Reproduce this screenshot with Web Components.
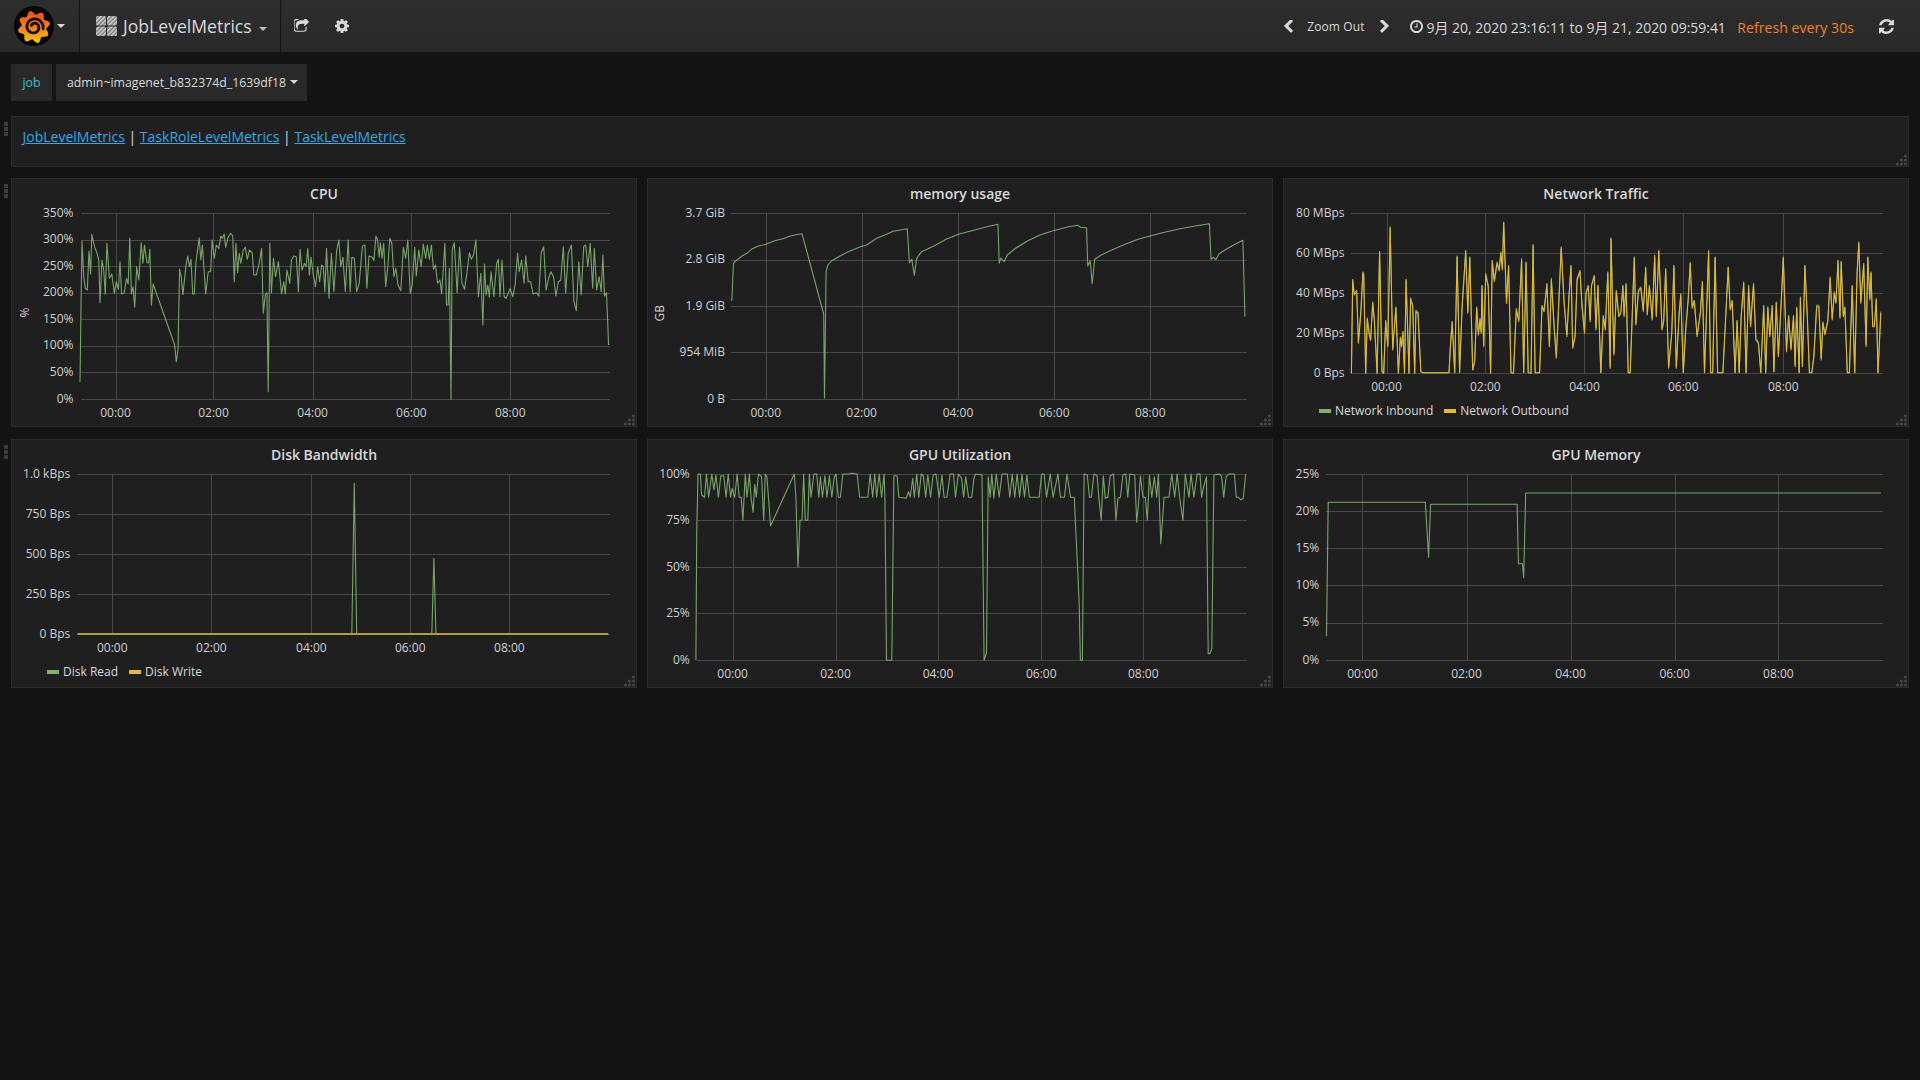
<!DOCTYPE html>
<html lang="zh">
<head>
<meta charset="utf-8">
<title>JobLevelMetrics</title>
<style>
html,body{margin:0;padding:0;background:#141414;color:#d8d9da;font-family:"Open Sans","Noto Sans CJK SC",sans-serif;overflow:hidden;height:1080px}
a{color:#33a9e8}
</style>
</head>
<body>
<gf-dashboard>
  <gf-navbar slot="nav" title-text="JobLevelMetrics"></gf-navbar>
  <gf-var-row label="job" value="admin~imagenet_b832374d_1639df18"></gf-var-row>
  <gf-text-panel>
    <a href="#">JobLevelMetrics</a> | <a href="#">TaskRoleLevelMetrics</a> | <a href="#">TaskLevelMetrics</a>
  </gf-text-panel>
  <gf-panel-grid>
    <gf-graph-panel chart="cpu" handle></gf-graph-panel>
    <gf-graph-panel chart="mem"></gf-graph-panel>
    <gf-graph-panel chart="net"></gf-graph-panel>
    <gf-graph-panel chart="disk" handle></gf-graph-panel>
    <gf-graph-panel chart="gpu"></gf-graph-panel>
    <gf-graph-panel chart="gmem"></gf-graph-panel>
  </gf-panel-grid>
</gf-dashboard>
<script>
const ICONS={
 gear:["128 128 1536 1536","M1152 896q0-106-75-181t-181-75-181 75-75 181 75 181 181 75 181-75 75-181zm512-109v222q0 12-8 23t-20 13l-185 28q-19 54-39 91 35 50 107 138 10 12 10 25t-9 23q-27 37-99 108t-94 71q-12 0-26-9l-138-108q-44 23-91 38-16 136-29 186-7 28-36 28h-222q-14 0-24.500-8.500t-11.500-21.500l-28-184q-49-16-90-37l-141 107q-10 9-25 9-14 0-25-11-126-114-165-168-7-10-7-23 0-12 8-23 15-21 51-66.500t54-70.500q-27-50-41-99l-183-27q-13-2-21-12.500t-8-23.500v-222q0-12 8-23t19-13l186-28q14-46 39-92-40-57-107-138-10-12-10-24 0-10 9-23 26-36 98.500-107.500t94.500-71.500q13 0 26 10l138 107q44-23 91-38 16-136 29-186 7-28 36-28h222q14 0 24.500 8.500t11.500 21.500l28 184q49 16 90 37l142-107q9-9 24-9 13 0 25 10 129 119 165 170 7 8 7 22 0 12-8 23-15 21-51 66.500t-54 70.500q26 50 41 98l183 28q13 2 21 12.500t8 23.500z"],
 refresh:["128 128 1536 1536","M1639 1056q0 5-1 7-64 268-268 434.500t-478 166.500q-146 0-282.500-55t-243.500-157l-129 129q-19 19-45 19t-45-19-19-45v-448q0-26 19-45t45-19h448q26 0 45 19t19 45-19 45l-137 137q71 66 161 102t187 36q134 0 250-65t186-179q11-17 53-117 8-23 30-23h192q13 0 22.500 9.500t9.500 22.500zm25-800v448q0 26-19 45t-45 19h-448q-26 0-45-19t-19-45 19-45l138-138q-148-137-349-137-134 0-250 65t-186 179q-11 17-53 117-8 23-30 23h-199q-13 0-22.500-9.500t-9.500-22.500v-7q65-268 270-434.500t480-166.500q146 0 284 55.500t245 156.500l130-129q19-19 45-19t45 19 19 45z"],
 left:["280 128 1170 1536","M1427 301l-531 531 531 531q19 19 19 45t-19 45l-166 166q-19 19-45 19t-45-19l-742-742q-19-19-19-45t19-45l742-742q19-19 45-19t45 19l166 166q19 19 19 45t-19 45z"],
 right:["340 128 1170 1536","M1363 877l-742 742q-19 19-45 19t-45-19l-166-166q-19-19-19-45t19-45l531-531-531-531q-19-19-19-45t19-45l166-166q19-19 45-19t45 19l742 742q19 19 19 45t-19 45z"],
 clock:["128 128 1536 1536","M1024 544v448q0 14-9 23t-23 9h-320q-14 0-23-9t-9-23v-64q0-14 9-23t23-9h224v-352q0-14 9-23t23-9h64q14 0 23 9t9 23zm416 352q0-148-73-273t-198-198-273-73-273 73-198 198-73 273 73 273 198 198 273 73 273-73 198-198 73-273zm224 0q0 209-103 385.500t-279.500 279.500-385.500 103-385.500-103-279.500-279.500-103-385.500 103-385.500 279.500-279.500 385.500-103 385.500 103 279.500 279.500 103 385.500z"],
 share:["128 128 1600 1536","M1472 989v259q0 119-84.500 203.500t-203.500 84.500h-832q-119 0-203.500-84.500t-84.500-203.500v-832q0-119 84.500-203.500t203.500-84.500h255q13 0 22.500 9.500t9.500 22.500q0 27-26 32-77 26-133 60-10 4-16 4h-112q-66 0-113 47t-47 113v832q0 66 47 113t113 47h832q66 0 113-47t47-113v-214q0-19 18-29 28-13 54-37 16-16 35-8 21 9 21 29zm237-496l-384 384q-18 19-45 19-12 0-25-5-39-17-39-59v-192h-160q-323 0-438 131-119 137-74 473 3 23-20 34-8 2-12 2-16 0-26-13-10-14-21-31t-39.500-68.500-49.500-99.500-38.500-114-17.500-122q0-49 3.500-91t14-90 28-88 47-81.500 68.500-74 94.500-61.500 124.500-48.500 159.500-30.500 196.500-11h160v-192q0-42 39-59 13-5 25-5 26 0 45 19l384 384q19 19 19 45t-19 45z"]
};
class GfIcon extends HTMLElement{
 constructor(){super();this.attachShadow({mode:"open"});}
 connectedCallback(){
  const [vb,d]=ICONS[this.getAttribute("name")];
  const w=this.getAttribute("w"),h=this.getAttribute("h");
  this.shadowRoot.innerHTML=`<style>:host{display:block;flex:none;width:${w}px;height:${h}px;line-height:0}svg{display:block;width:100%;height:100%}</style><svg viewBox="${vb}" preserveAspectRatio="none"><path d="${d}" fill="currentColor"/></svg>`;
 }
}
customElements.define("gf-icon",GfIcon);

class GfLogo extends HTMLElement{
 constructor(){
  super();this.attachShadow({mode:"open"});
  const cx=20,cy=21;let gear="";
  for(let i=0;i<=240;i++){
   const a=i/240*Math.PI*2-0.25;
   const t=((a+0.25)*8/(Math.PI*2))%1, f=Math.pow(0.5+0.5*Math.cos(t*Math.PI*2),0.9);
   const r=12.4+3.9*f;
   gear+=(i?"L":"M")+(cx+r*Math.cos(a)).toFixed(2)+" "+(cy+r*Math.sin(a)).toFixed(2);
  }
  let sp="";
  for(let i=0;i<=120;i++){
   const u=i/120,a=0.2-u*Math.PI*2*1.45,r=9.3-u*6.3;
   sp+=(i?"L":"M")+(cx+r*Math.cos(a)).toFixed(2)+" "+(cy+r*Math.sin(a)).toFixed(2);
  }
  this.shadowRoot.innerHTML=`<style>:host{display:block;flex:none;width:40px;height:40px}svg{display:block}</style>
  <svg width="40" height="40" viewBox="0 0 40 40"><defs><linearGradient id="g" x1="0" y1="0" x2="0" y2="1"><stop offset="0" stop-color="#f0501f"/><stop offset=".5" stop-color="#f57b20"/><stop offset="1" stop-color="#fcc60d"/></linearGradient></defs>
  <circle cx="20" cy="20" r="20" fill="#050505"/><path d="${gear}Z" fill="url(#g)"/>
  <path d="${sp}" fill="none" stroke="#1a0d02" stroke-width="2.800" stroke-linecap="round"/></svg>`;
 }
}
customElements.define("gf-logo",GfLogo);

class GfCaret extends HTMLElement{
 constructor(){super();this.attachShadow({mode:"open"}).innerHTML=`<style>:host{display:block;flex:none;width:0;height:0;border-left:4px solid transparent;border-right:4px solid transparent;border-top:4px solid currentColor}</style>`;}
}
customElements.define("gf-caret",GfCaret);

class GfNavbar extends HTMLElement{
 constructor(){
  super();this.attachShadow({mode:"open"});
 }
 connectedCallback(){
  this.shadowRoot.innerHTML=`<style>
  :host{display:flex;align-items:stretch;height:52px;background:linear-gradient(#2d2d2d,#292929);color:#d8d9da;font-size:14px}
  .logo{width:79px;box-sizing:border-box;display:flex;align-items:center;padding:0 0 0 14px;border-right:0}
  .logo gf-caret{margin:0 0 0 3px;color:#d8d9da}
  .sep{width:1px;background:#141414;flex:none}
  .title{width:200px;box-sizing:border-box;display:flex;align-items:center;padding-left:16px;font-size:17.600px}
  .title svg{display:block;margin-right:6px;flex:none}
  .title gf-caret{margin:6px 0 0 7px;color:#b9babb}
  .tools{display:flex;align-items:center;padding-left:13px;gap:26px}
  .right{margin-left:auto;display:flex;align-items:center;padding-right:26px}
  .zoom{font-size:12px;margin:0 15px 0 14px;letter-spacing:.1px}
  .time{margin:2px 11.500px 0 4px;white-space:nowrap;letter-spacing:-.03px}
  .refresh{color:#f5811f;margin:2px 25px 0 0;white-space:nowrap;letter-spacing:.07px}
  </style>
  <div class="logo"><gf-logo></gf-logo><gf-caret></gf-caret></div><div class="sep"></div>
  <div class="title">
   <svg width="21" height="20" viewBox="0 0 21 20"><defs><pattern id="h" width="3" height="3" patternUnits="userSpaceOnUse" patternTransform="rotate(45)"><rect width="3" height="3" fill="#787878"/><rect width="1.600" height="3" fill="#cfcfcf"/></pattern></defs>
   <rect x="0" y="0" width="10" height="9.500" rx="1.500" fill="url(#h)"/><rect x="11" y="0" width="10" height="9.500" rx="1.500" fill="url(#h)"/><rect x="0" y="10.500" width="10" height="9.500" rx="1.500" fill="url(#h)"/><rect x="11" y="10.500" width="10" height="9.500" rx="1.500" fill="url(#h)"/></svg>
   <span>${this.getAttribute("title-text")}</span><gf-caret></gf-caret></div><div class="sep"></div>
  <div class="tools"><gf-icon name="share" w="15" h="14"></gf-icon><gf-icon name="gear" w="14" h="14"></gf-icon></div>
  <div class="right">
   <gf-icon name="left" w="10" h="13"></gf-icon><span class="zoom">Zoom Out</span><gf-icon name="right" w="10" h="13" style="margin-right:20px"></gf-icon>
   <gf-icon name="clock" w="13" h="13"></gf-icon><span class="time">9月 20, 2020 23:16:11 to 9月 21, 2020 09:59:41</span>
   <span class="refresh">Refresh every 30s</span><gf-icon name="refresh" w="15" h="15"></gf-icon>
  </div>`;
 }
}
customElements.define("gf-navbar",GfNavbar);

class GfVarRow extends HTMLElement{
 constructor(){super();this.attachShadow({mode:"open"});}
 connectedCallback(){
  this.shadowRoot.innerHTML=`<style>
  :host{display:flex;gap:4px;height:37px;margin:12px 11px 15px;font-size:12.300px}
  div{display:flex;align-items:center;background:#292929;box-sizing:border-box}
  .l{width:41px;justify-content:center;color:#36c3d6}
  .v{width:251px;padding-left:11px;color:#d8d9da;white-space:nowrap}
  gf-caret{margin:-2px 0 0 4px}
  </style><div class="l">${this.getAttribute("label")}</div><div class="v">${this.getAttribute("value")}<gf-caret></gf-caret></div>`;
 }
}
customElements.define("gf-var-row",GfVarRow);

const handleCss=`.drag{position:absolute;left:-8px;top:5px;width:4px;height:14px;background:repeating-linear-gradient(#3d3d3d 0 4px,transparent 4px 5px)}
.resize{position:absolute;right:0;bottom:0;display:block}`;
const resizeSvg=`<svg class="resize" width="12" height="12" viewBox="0 0 12 12" fill="#484848"><circle cx="9.500" cy="2" r="1.500"/><circle cx="9.500" cy="6" r="1.500"/><circle cx="5.500" cy="6" r="1.500"/><circle cx="9.500" cy="10" r="1.500"/><circle cx="5.500" cy="10" r="1.500"/><circle cx="1.500" cy="10" r="1.500"/></svg>`;

class GfTextPanel extends HTMLElement{
 constructor(){
  super();
  this.attachShadow({mode:"open"}).innerHTML=`<style>
  :host{display:block;position:relative;box-sizing:border-box;height:51px;margin:0 11px 11px;padding:10px 10.500px 0;background:#1f1f20;border:1px solid #2a2a2a;font-size:14px;line-height:20px;color:#d8d9da}
  ${handleCss}
  </style><div class="drag"></div><slot></slot>${resizeSvg}`;
 }
}
customElements.define("gf-text-panel",GfTextPanel);

const CHARTS={
 cpu:{title:"CPU",px:11,py:178,sx:2.45,ox:0,oy:170,left:195,right:1492,lab:180,ylab:"%",ylabx:60,ylaby:428,
  y:[["350%",130],["300%",209],["250%",289],["200%",368],["150%",448],["100%",527],["50%",607],["0%",688]],
  top:130,bot:688,xlabY:728,x:[283,523,766,1008,1250],
  series:[["#7eb26d","196,637;199,370;201,213;205,320;209,355;214,360;218,243;222,312;225,193;232,232;238,250;242,270;245,398;250,270;254,300;258,373;262,220;268,325;274,312;280,370;285,335;290,358;294,275;298,372;304,370;310,325;314,342;318,205;322,372;326,350;330,412;335,290;340,330;346,218;350,280;354,225;360,278;364,278;367,238;371,406;375,342;428,525;432,575;436,540;440,297;444,320;448,374;456,283;460,258;464,290;468,268;472,372;476,372;480,278;488,203;492,270;496,225;504,372;510,305;516,305;520,210;525,265;530,225;536,235;541,198;545,205;549,192;553,232;558,205;565,190;570,197;574,335;578,220;582,308;586,250;590,280;596,240;601,232;606,268;611,240;618,248;622,315;628,315;635,280;641,235;645,430;650,375;654,368;657,665;661,220;665,368;670,265;675,320;682,275;690,372;695,335;699,372;703,300;710,340;714,270;720,258;726,260;731,365;735,238;740,300;746,280;750,290;754,235;758,315;762,262;768,318;773,350;778,290;783,335;788,285;792,290;796,365;800,235;806,385;812,250;818,365;825,240;830,210;835,290;840,262;846,365;853,210;858,365;862,262;868,265;874,365;880,340;888,228;894,225;899,355;904,258;912,262;916,272;921,198;925,210;929,262;932,218;936,265;940,220;945,350;950,290;955,205;960,220;965,320;970,295;975,345;982,362;988,232;994,265;999,210;1005,370;1010,345;1016,232;1020,318;1026,240;1032,290;1037,222;1043,265;1047,225;1052,268;1057,225;1062,298;1067,285;1072,340;1078,330;1082,372;1090,220;1094,405;1098,405;1101,295;1105,688;1108,240;1113,218;1120,368;1126,232;1132,340;1138,358;1144,310;1150,248;1155,268;1160,255;1166,210;1172,380;1178,310;1183,465;1187,282;1191,375;1195,345;1199,382;1203,305;1210,380;1217,280;1221,268;1225,380;1230,270;1235,380;1240,385;1250,355;1256,380;1262,345;1268,250;1272,305;1278,270;1284,340;1288,258;1294,335;1300,335;1306,372;1314,368;1320,378;1326,248;1332,230;1338,360;1344,325;1350,305;1356,320;1362,378;1368,335;1374,330;1380,230;1386,370;1392,250;1400,225;1406,395;1412,422;1418,275;1424,375;1430,230;1435,225;1440,290;1446,220;1452,355;1456,235;1462,360;1468,320;1473,365;1477,255;1481,378;1486,368;1491,525"]]},
 mem:{title:"memory usage",px:647,py:178,sx:2.45,ox:640,oy:170,left:220,right:1485,lab:208,ylab:"GB",ylabx:48,ylaby:430,
  y:[["3.7 GiB",130],["2.8 GiB",269],["1.9 GiB",409],["954 MiB",547],["0 B",688]],
  top:130,bot:688,xlabY:728,x:[308,543,779,1015,1250],
  series:[["#7eb26d","225,393;229,280;235,272;250,258;262,250;275,236;290,228;305,224;330,212;350,206;370,197;397,191;450,432;452,684;456,305;460,285;470,272;490,258;510,245;540,230;555,225;580,205;600,195;620,184;655,176;660,278;666,268;672,316;678,265;690,245;720,228;750,208;780,193;820,180;850,170;877,163;880,280;884,264;892,275;900,255;920,235;950,212;980,195;1010,183;1050,170;1072,166;1080,172;1094,173;1097,288;1103,273;1108,341;1114,268;1130,255;1160,238;1190,222;1220,208;1250,198;1280,188;1320,177;1360,168;1395,161;1399,268;1405,262;1411,269;1418,252;1440,235;1465,218;1477,211;1482,440"]]},
 net:{title:"Network Traffic",px:1283,py:178,sx:2.45,ox:1280,oy:170,left:172,right:1475,lab:158,
  y:[["80 MBps",130],["60 MBps",250],["40 MBps",370],["20 MBps",490],["0 Bps",610]],
  top:130,bot:610,xlabY:650,x:[261,503,746,988,1233],
  legend:[["#7eb26d","Network Inbound"],["#eab839","Network Outbound"]],
  dup:true,
  series:[["#eab839","175,610;178,332;182,375;188,365;192,520;198,430;203,310;205,315;210,610;214,448;218,490;222,512;227,400;231,450;238,610;244,248;250,605;254,610;259,455;264,530;270,175;276,540;284,415;290,610;295,505;298,530;301,488;305,610;309,332;316,610;320,388;325,410;330,610;333,425;338,430;345,605;350,608;414,608;418,520;422,458;428,608;434,262;440,608;446,420;455,245;460,430;465,265;472,600;477,575;482,415;486,495;490,450;493,490;495,350;499,530;504,315;510,350;516,610;520,275;525,335;532,280;537,303;541,250;545,300;548,160;555,400;560,290;566,608;572,610;579,420;585,455;592,270;597,608;603,280;608,608;615,610;620,228;625,608;636,608;642,410;647,425;654,345;660,530;665,330;672,480;677,565;683,400;689,235;696,400;703,500;708,380;713,290;717,535;723,500;728,330;735,305;740,410;746,490;750,370;755,350;760,455;763,350;770,320;774,480;779,350;786,608;792,440;797,480;803,310;809,595;811,208;818,555;824,365;830,440;835,430;840,350;843,440;848,345;853,608;858,608;868,265;872,465;878,365;884,355;890,425;896,295;900,435;905,350;912,450;918,260;922,440;928,245;936,480;940,455;945,300;952,595;960,490;965,290;971,595;978,430;982,375;988,608;994,480;1000,390;1005,282;1010,415;1015,395;1022,500;1030,430;1035,338;1040,608;1050,245;1055,608;1060,608;1066,265;1072,608;1085,608;1098,295;1103,420;1108,395;1115,608;1120,455;1125,608;1130,440;1136,340;1142,608;1148,350;1153,470;1160,345;1166,510;1172,520;1178,608;1185,410;1190,608;1195,415;1200,500;1206,410;1210,605;1216,400;1221,560;1228,400;1233,265;1241,545;1246,440;1252,540;1258,440;1262,590;1266,415;1272,608;1275,385;1280,590;1286,290;1292,440;1297,608;1303,608;1308,560;1315,410;1320,410;1326,570;1330,460;1335,495;1342,455;1348,325;1353,450;1358,370;1362,400;1367,275;1372,445;1375,278;1380,440;1384,415;1390,608;1395,608;1402,350;1408,608;1414,310;1418,220;1423,400;1430,285;1436,530;1440,265;1445,390;1448,310;1452,470;1456,470;1461,390;1465,608;1472,430"]]},
 disk:{title:"Disk Bandwidth",px:11,py:439,sx:2.45,ox:0,oy:435,left:187,right:1492,lab:172,
  y:[["1.0 kBps",118],["750 Bps",238],["500 Bps",358],["250 Bps",478],["0 Bps",598]],
  top:118,bot:598,xlabY:638,x:[275,518,763,1005,1248],
  legend:[["#7eb26d","Disk Read"],["#eab839","Disk Write"]],
  series:[["#7eb26d","190,598;862,598;868,145;874,598;1058,598;1063,370;1068,598;1490,598"],["#b7a537","190,597;1490,597",2]]},
 gpu:{title:"GPU Utilization",px:647,py:439,sx:2.45,ox:640,oy:435,left:137,right:1485,lab:122,
  y:[["100%",117],["75%",256],["50%",397],["25%",535],["0%",676]],
  top:117,bot:676,xlabY:716,x:[227,479,730,983,1233],
  series:[["#7eb26d","137,676;139,300;142,117;148,117;151,180;158,187;163,117;168,187;176,117;181,165;186,120;192,187;198,122;205,122;211,187;216,117;222,187;226,160;232,187;238,117;243,187;248,187;252,256;258,117;262,187;268,117;272,187;277,232;281,148;285,187;290,117;298,125;303,256;307,117;311,125;320,272;378,117;382,187;387,396;392,256;397,256;401,117;405,256;411,256;415,117;419,187;426,117;433,117;438,187;442,125;447,187;453,122;458,187;464,122;470,187;476,125;480,117;486,187;491,187;497,117;510,117;520,115;532,117;538,187;558,187;564,117;570,187;575,117;580,187;586,117;592,187;598,117;600,187;604,676;617,676;622,122;630,122;634,187;652,190;658,170;662,187;668,130;672,187;678,117;683,187;689,117;694,122;700,187;705,120;712,187;718,120;725,117;733,187;740,120;745,187;752,187;760,117;768,117;773,187;780,117;788,130;793,187;798,125;805,187;813,187;818,130;822,117;838,120;843,676;849,655;853,125;858,187;862,117;867,190;873,117;880,187;887,117;900,117;906,187;912,117;918,187;924,117;930,187;936,117;942,187;948,120;954,187;978,187;984,117;990,117;996,187;1005,117;1012,187;1024,117;1030,187;1040,187;1046,117;1055,187;1064,187;1067,270;1072,400;1076,508;1079,676;1084,676;1088,117;1096,120;1101,187;1106,187;1112,117;1120,122;1124,187;1130,256;1135,122;1140,190;1146,187;1152,122;1160,117;1166,256;1171,190;1177,187;1183,120;1190,117;1195,187;1200,117;1212,120;1217,262;1221,210;1226,122;1232,187;1238,187;1243,256;1248,120;1254,187;1260,125;1266,187;1270,117;1276,326;1284,187;1296,187;1303,117;1310,187;1316,117;1322,187;1330,256;1336,117;1345,187;1350,117;1357,187;1365,117;1372,117;1376,187;1380,160;1388,125;1392,656;1396,656;1401,642;1406,120;1420,117;1425,125;1430,187;1436,125;1442,117;1456,117;1461,187;1466,187;1472,195;1478,190;1484,117"]]},
 gmem:{title:"GPU Memory",px:1283,py:439,sx:2.45,ox:1280,oy:435,left:110,right:1475,lab:96,
  y:[["25%",117],["20%",229],["15%",340],["10%",451],["5%",563],["0%",676]],
  top:117,bot:676,xlabY:716,x:[202,457,712,967,1221],
  series:[["#7eb26d","114,604;118,202;356,202;364,367;369,208;581,208;584,386;594,386;597,428;602,174;1472,174"]]}
};

class GfGraphPanel extends HTMLElement{
 constructor(){super();this.attachShadow({mode:"open"});}
 connectedCallback(){
  const c=CHARTS[this.getAttribute("chart")];
  const X=v=>c.ox+v/c.sx, Y=v=>c.oy+v/3;
  const snap=v=>Math.round(v)+.5;
  const h=c.legend?189:217;
  let g="";
  const l=snap(X(c.left)),r=snap(X(c.right)),t=snap(Y(c.top)),b=snap(Y(c.bot));
  for(const [txt,v] of c.y){const yy=snap(Y(v));
   g+=`<line x1="${l}" x2="${r}" y1="${yy}" y2="${yy}"/>`;}
  for(const v of c.x){const xx=snap(X(v));g+=`<line x1="${xx}" x2="${xx}" y1="${t}" y2="${b}"/>`;}
  let labels="";
  for(const [txt,v] of c.y) labels+=`<text x="${X(c.lab)}" y="${Y(v)-0.1}" text-anchor="end" dy=".32em">${txt}</text>`;
  const tnames=["00:00","02:00","04:00","06:00","08:00"];
  c.x.forEach((v,i)=>{labels+=`<text x="${X(v)}" y="${Y(c.xlabY)}" text-anchor="middle" dy=".32em">${tnames[i]}</text>`;});
  if(c.ylab){const yx=X(c.ylabx),yy=Y(c.ylaby);labels+=`<text transform="translate(${yx} ${yy}) rotate(-90)" text-anchor="middle" dy=".35em">${c.ylab}</text>`;}
  const pts=s=>s.split(";").map(p=>{const [a,bb]=p.split(",");return X(+a).toFixed(1)+","+Y(+bb).toFixed(1);}).join(" ");
  let lines="";
  if(c.dup){
   const sh=c.series[0][1].split(";").map(p=>{const [a,bb]=p.split(",");const n=+bb<600?+bb-5:+bb;return X(+a).toFixed(1)+","+Y(n).toFixed(1);}).join(" ");
   lines+=`<polyline points="${sh}" style="stroke:#7eb26d"/>`;
  }
  for(const s of c.series) lines+=`<polyline points="${pts(s[1])}" style="stroke:${s[0]};stroke-width:${s[2]||1.1}px"/>`;
  const legend=c.legend?`<div class="legend">${c.legend.map(([col,txt])=>`<span class="it"><i style="background:${col}"></i>${txt}</span>`).join("")}</div>`:"";
  this.shadowRoot.innerHTML=`<style>
  :host{display:flex;flex-direction:column;position:relative;box-sizing:border-box;width:626px;height:249px;background:#1f1f20;border:1px solid #2a2a2a;color:#d8d9da}
  ${handleCss}
  .t{flex:none;height:30px;line-height:30px;text-align:center;font-size:14px;font-weight:600;color:#d8d9da}
  svg.c{display:block;flex:none;font-size:12px;overflow:visible}
  svg.c text{fill:#cfd0d1}
  .grid line{stroke:#484848;stroke-width:1;shape-rendering:crispEdges}
  polyline{fill:none;stroke-linejoin:round;opacity:.92}
  .legend{display:flex;flex:none;height:25px;align-items:center;padding-left:35px;gap:11px;font-size:12px}
  .it{display:flex;align-items:center;white-space:nowrap}
  .it i{display:block;width:12px;height:4px;margin-right:4px}
  </style>${this.hasAttribute("handle")?'<div class="drag"></div>':""}
  <div class="t">${c.title}</div>
  <svg class="c" width="624" height="${h}" viewBox="${c.px+1} ${c.py+31} 624 ${h}"><g class="grid">${g}</g>${lines}${labels}</svg>
  ${legend}${resizeSvg}`;
 }
}
customElements.define("gf-graph-panel",GfGraphPanel);

class GfPanelGrid extends HTMLElement{
 constructor(){super();this.attachShadow({mode:"open"}).innerHTML=`<style>:host{display:grid;grid-template-columns:repeat(3,626px);column-gap:10px;row-gap:12px;margin:0 11px}</style><slot></slot>`;}
}
customElements.define("gf-panel-grid",GfPanelGrid);

class GfDashboard extends HTMLElement{
 constructor(){super();this.attachShadow({mode:"open"}).innerHTML=`<style>:host{display:block;width:1920px;height:1080px;background:#141414}</style><slot name="nav"></slot><slot></slot>`;}
}
customElements.define("gf-dashboard",GfDashboard);
</script>
</body>
</html>
